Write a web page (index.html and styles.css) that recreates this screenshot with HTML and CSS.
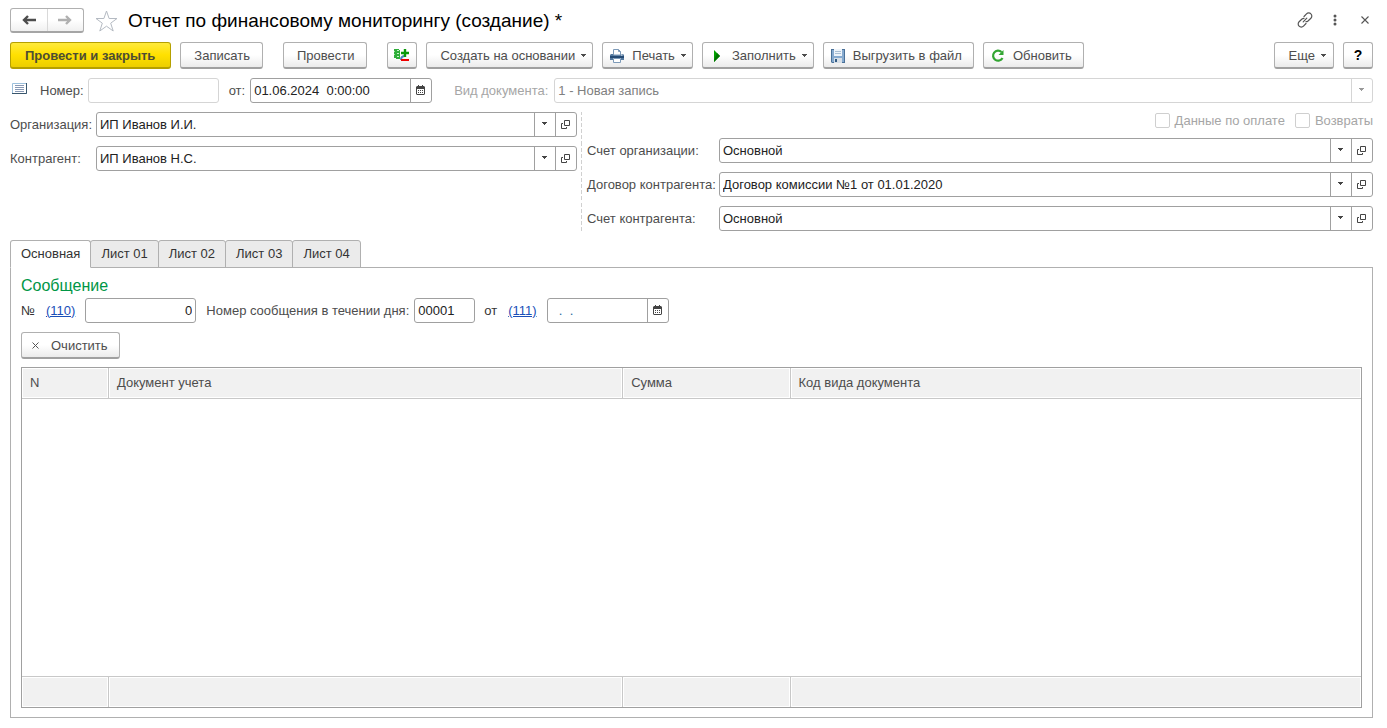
FILE: index.html
```html
<!DOCTYPE html>
<html lang="ru">
<head>
<meta charset="utf-8">
<title>Отчет по финансовому мониторингу (создание) *</title>
<link rel="stylesheet" href="styles.css">
</head>
<body>
<svg class="defs" aria-hidden="true">
  <symbol id="caret" viewBox="0 0 6 4" preserveAspectRatio="xMinYMin"><path d="M0 0h5v1H4v1H3v1H2V2H1V1H0z" fill="currentColor"/></symbol>
  <symbol id="open" viewBox="0 0 10 9" fill="none" stroke="currentColor"><path d="M3.500.5h5v5h-5zM2 3.500H.5v5h5V7"/></symbol>
  <symbol id="calendar" viewBox="0 0 10 11"><path d="M1 1h1V0h1v1h3V0h1v1h1l1 1v7l-1 1H1L0 9V2zM1 4v5h7V4z" fill="currentColor" fill-rule="evenodd"/><path d="M2 5h1v1H2zM4 5h1v1H4zM6 5h1v1H6zM2 7h1v1H2zM4 7h1v1H4zM6 7h1v1H6z" fill="currentColor"/></symbol>
</svg>

<header class="titlebar">
  <div class="nav">
    <button type="button" class="nav-btn" aria-label="Назад"><svg width="14" height="12" viewBox="0 0 14 12"><path d="M6 2 2 6l4 4M2 6h12" fill="none" stroke="#4d4d4d" stroke-width="2.400"/></svg></button>
    <button type="button" class="nav-btn" aria-label="Вперед"><svg width="14" height="12" viewBox="0 0 14 12"><path d="m8 2 4 4-4 4M12 6H0" fill="none" stroke="#b0b0b0" stroke-width="2.400"/></svg></button>
  </div>
  <button type="button" class="plain star" aria-label="В избранное"><svg width="23" height="22" viewBox="0 0 23 22"><path d="m11.500 1 2.600 7.500H22l-6.300 4.700L18.200 21l-6.700-4.800L4.800 21l2.500-7.800L1 8.500h7.900z" fill="#fff" stroke="#b4bac2"/></svg></button>
  <h1 class="title">Отчет по финансовому мониторингу (создание) *</h1>
  <div class="window-tools">
    <button type="button" class="plain" aria-label="Получить ссылку"><svg width="16" height="16" viewBox="0 0 16 16" fill="none" stroke="#555" stroke-width="1.200" stroke-linecap="round"><path d="m7 4.500 2.500-2.600a3 3 0 0 1 4.400 0 3 3 0 0 1 0 4.300L11 9a3 3 0 0 1-2 .7M9 11.500l-2.500 2.600a3 3 0 0 1-4.400 0 3 3 0 0 1 0-4.300L5 7a3 3 0 0 1 2-.7M6.200 9.800l3.600-3.600"/></svg></button>
    <button type="button" class="plain" aria-label="Меню"><svg width="4" height="12" viewBox="0 0 4 12" fill="#555"><circle cx="2" cy="2" r="1.500"/><circle cx="2" cy="6" r="1.500"/><circle cx="2" cy="10" r="1.500"/></svg></button>
    <button type="button" class="plain" aria-label="Закрыть"><svg width="8" height="8" viewBox="0 0 8 8"><path d="m.5.5 7 7m0-7-7 7" stroke="#555" stroke-width="1.100"/></svg></button>
  </div>
</header>

<div class="toolbar">
  <button type="button" class="btn primary">Провести и закрыть</button>
  <button type="button" class="btn">Записать</button>
  <button type="button" class="btn apart">Провести</button>
  <button type="button" class="btn icon-only apart" aria-label="Движения документа"><svg width="18" height="16" viewBox="0 0 18 16"><path d="M1 2h5v1h1v9H3v-1H1z" fill="#2fae3a"/><path d="M4 3.500h2M4 6.500h2M4 9.500h2" stroke="#c9f2cb"/><path d="M1 4.500h1M1 7.500h1" stroke="#9be0a0"/><path d="M8 13c0-3 1-4 4-4" fill="none" stroke="#4a86c0" stroke-width="2"/><path d="M12 2v8M8 6h8" stroke="#0b9a0b" stroke-width="2.400"/><path d="M8 13h8" stroke="#f00000" stroke-width="2"/></svg></button>
  <button type="button" class="btn menu">Создать на основании<svg class="caret"><use href="#caret"/></svg></button>
  <button type="button" class="btn menu tool"><svg class="tool-icon" width="14" height="14" viewBox="0 0 14 14"><path d="M1 5h12l1 1v5h-3V9H3v2H0V6z" fill="#54799f"/><path d="M0 7h14v2H0z" fill="#254b75"/><path d="M3.500 6V.5h5l2 2V6zM3.500 9.500h7v4h-7z" fill="#fff" stroke="#7d9ab8"/><path d="M8.500.5v2h2" fill="none" stroke="#7d9ab8"/><path d="M11 6h1.500" stroke="#fff"/></svg><span class="tool-label">Печать</span><svg class="caret"><use href="#caret"/></svg></button>
  <button type="button" class="btn menu tool"><svg class="tool-icon" width="14" height="14" viewBox="0 0 14 14"><path d="m4 1 6 6-6 6z" fill="#00a000"/><path d="m7 4 3 3-6 6v-2z" fill="#007400"/></svg><span class="tool-label">Заполнить</span><svg class="caret"><use href="#caret"/></svg></button>
  <button type="button" class="btn tool"><svg class="tool-icon" width="14" height="14" viewBox="0 0 14 14"><path d="M0 0h14v14H1l-1-1z" fill="#4a7199"/><path d="M1 1h12v12H1z" fill="#87abd0"/><path d="M3 0h8v7H3z" fill="#eef4fa"/><path d="M4 2.500h6M4 4.500h6" stroke="#a9bfd4"/><path d="M3 9h8v5H3z" fill="#d7dfe7"/><path d="M4 10h2v3H4z" fill="#315a84"/></svg><span class="tool-label">Выгрузить в файл</span></button>
  <button type="button" class="btn tool"><svg class="tool-icon" width="14" height="14" viewBox="0 0 14 14"><path d="M10.500 3A5 5 0 1 0 11.500 9" fill="none" stroke="#32a532" stroke-width="2.200"/><path d="M12.500 1v5h-5z" fill="#32a532"/></svg><span class="tool-label">Обновить</span></button>
  <span class="spacer"></span>
  <button type="button" class="btn menu more">Еще<svg class="caret"><use href="#caret"/></svg></button>
  <button type="button" class="btn icon-only help">?</button>
</div>

<div class="doc-row">
  <svg class="doc-icon" width="15" height="11" viewBox="0 0 15 11"><path d="M.5.5h14v10H.5z" fill="#fff" stroke="#9dc0dc"/><path d="M14.500 0v10.500H0" fill="none" stroke="#39566d"/><path d="M3 2.500h9M3 4.500h9M3 6.500h9M3 8.500h9" stroke="#8899b5"/></svg>
  <label class="label" for="number">Номер:</label>
  <input class="box number disabled" id="number" disabled>
  <label class="label date-label" for="date">от:</label>
  <div class="box field date">
    <input id="date" value="01.06.2024  0:00:00">
    <button type="button" aria-label="Календарь"><svg width="10" height="11"><use href="#calendar"/></svg></button>
  </div>
  <label class="label kind-label muted" for="kind">Вид документа:</label>
  <div class="box field grow disabled">
    <div class="pick"><select id="kind" disabled><option>1 - Новая запись</option></select><span class="arrow"><svg class="caret"><use href="#caret"/></svg></span></div>
  </div>
</div>

<div class="columns">
  <div class="form left">
    <label class="label" for="org">Организация:</label>
    <div class="box field">
      <div class="pick"><select id="org"><option>ИП Иванов И.И.</option></select><span class="arrow"><svg class="caret"><use href="#caret"/></svg></span></div>
      <button type="button" aria-label="Открыть"><svg width="10" height="9"><use href="#open"/></svg></button>
    </div>
    <label class="label" for="partner">Контрагент:</label>
    <div class="box field">
      <div class="pick"><select id="partner"><option>ИП Иванов Н.С.</option></select><span class="arrow"><svg class="caret"><use href="#caret"/></svg></span></div>
      <button type="button" aria-label="Открыть"><svg width="10" height="9"><use href="#open"/></svg></button>
    </div>
  </div>
  <div class="right-column">
    <div class="checks">
      <label class="check"><input type="checkbox" disabled>Данные по оплате</label>
      <label class="check"><input type="checkbox" disabled>Возвраты</label>
    </div>
    <div class="form right">
      <label class="label" for="org-account">Счет организации:</label>
      <div class="box field">
        <div class="pick"><select id="org-account"><option>Основной</option></select><span class="arrow"><svg class="caret"><use href="#caret"/></svg></span></div>
        <button type="button" aria-label="Открыть"><svg width="10" height="9"><use href="#open"/></svg></button>
      </div>
      <label class="label" for="contract">Договор контрагента:</label>
      <div class="box field">
        <div class="pick"><select id="contract"><option>Договор комиссии №1 от 01.01.2020</option></select><span class="arrow"><svg class="caret"><use href="#caret"/></svg></span></div>
        <button type="button" aria-label="Открыть"><svg width="10" height="9"><use href="#open"/></svg></button>
      </div>
      <label class="label" for="partner-account">Счет контрагента:</label>
      <div class="box field">
        <div class="pick"><select id="partner-account"><option>Основной</option></select><span class="arrow"><svg class="caret"><use href="#caret"/></svg></span></div>
        <button type="button" aria-label="Открыть"><svg width="10" height="9"><use href="#open"/></svg></button>
      </div>
    </div>
  </div>
</div>

<div class="tabs" role="tablist">
  <button type="button" class="tab active" role="tab" aria-selected="true">Основная</button>
  <button type="button" class="tab" role="tab" aria-selected="false">Лист 01</button>
  <button type="button" class="tab" role="tab" aria-selected="false">Лист 02</button>
  <button type="button" class="tab" role="tab" aria-selected="false">Лист 03</button>
  <button type="button" class="tab" role="tab" aria-selected="false">Лист 04</button>
</div>

<main class="panel" role="tabpanel">
  <h2 class="section">Сообщение</h2>
  <div class="message-row">
    <label class="dark" for="message-number">№</label>
    <a class="link" href="#message-number">(110)</a>
    <input class="box message-number" id="message-number" value="0">
    <label class="label day-label" for="day-number">Номер сообщения в течении дня:</label>
    <input class="box day-number" id="day-number" value="00001">
    <label class="dark from-label" for="message-date">от</label>
    <a class="link" href="#message-date">(111)</a>
    <div class="box field message-date">
      <input id="message-date" value="  .  .">
      <button type="button" aria-label="Календарь"><svg width="10" height="11"><use href="#calendar"/></svg></button>
    </div>
  </div>
  <button type="button" class="btn clear"><svg width="7" height="7" viewBox="0 0 7 7"><path d="m.5.5 6 6m0-6-6 6" stroke="#555"/></svg>Очистить</button>
  <div class="table-wrap">
    <table class="table">
      <colgroup><col class="col-n"><col class="col-doc"><col class="col-sum"><col></colgroup>
      <thead><tr><th>N</th><th>Документ учета</th><th>Сумма</th><th>Код вида документа</th></tr></thead>
      <tbody><tr><td colspan="4"></td></tr></tbody>
      <tfoot><tr><td></td><td></td><td></td><td></td></tr></tfoot>
    </table>
  </div>
</main>
</body>
</html>
```
FILE: styles.css
```css
* { box-sizing: border-box; }

body {
  display: flex;
  flex-direction: column;
  min-height: 100vh;
  margin: 0;
  padding: 8px 14px 10px 10px;
  background: #fff;
  color: #4d4d4d;
  font: 13px/16px "Liberation Sans", Arial, sans-serif;
}

button, input, select { margin: 0; font: inherit; color: inherit; }
.defs { position: absolute; width: 0; height: 0; }
.caret { flex: none; width: 6px; height: 4px; }

/* Title bar */
.titlebar { display: flex; align-items: center; height: 25px; margin-bottom: 9px; }
.nav {
  display: flex;
  width: 74px;
  height: 25px;
  border: 1px solid #b0b0b0;
  border-bottom: 2px solid #a5a5a5;
  border-radius: 3px;
  background: linear-gradient(#fff 50%, #f0f0f0);
}
.nav-btn {
  display: flex;
  flex: 1;
  align-items: center;
  justify-content: center;
  padding: 0;
  border: 0;
  background: none;
}
.nav-btn + .nav-btn { border-left: 1px solid #d9d9d9; }
.plain { display: flex; align-items: center; justify-content: center; padding: 0; border: 0; background: none; }
.star { margin: 0 10px 0 11px; }
.title { flex: 1; margin: 0; color: #000; font-size: 19px; font-weight: 400; line-height: 24px; }
.window-tools { display: flex; height: 23px; align-self: flex-start; margin-right: -7px; }
.window-tools .plain { width: 30px; }

/* Command bar */
.toolbar { display: flex; gap: 9px; margin-bottom: 9px; }
.btn {
  display: flex;
  align-items: center;
  height: 27px;
  padding: 1px 12px 0 13px;
  border: 1px solid #b0b0b0;
  border-bottom: 2px solid #a0a0a0;
  border-radius: 3px;
  background: linear-gradient(#fff 50%, #ebebeb);
  white-space: nowrap;
}
.primary {
  padding-right: 15px;
  padding-left: 14px;
  border-color: #b5a000;
  background: linear-gradient(#ffea3c, #ffe000 50%, #ecce00);
  color: #4d4d33;
  font-weight: 700;
}
.apart { margin-left: 11px; }
.icon-only { justify-content: center; width: 30px; padding: 0; }
.menu { padding-right: 5px; gap: 6px; }
.more { padding-right: 6px; padding-left: 14px; }
.tool { padding-left: 7px; gap: 0; }
.tool-icon { flex: none; }
.tool-label { padding: 0 6px 0 8px; }
.tool:not(.menu) { padding-right: 5px; }
.help { color: #000; font-weight: 700; font-size: 14px; }
.spacer { flex: 1; }

/* Fields */
.label { white-space: nowrap; }
.muted { color: #a6a6a6; }
.dark { color: #333; }
.box {
  height: 25px;
  border: 1px solid #a0a0a0;
  border-radius: 3px;
  background: #fff;
  color: #222;
}
input.box { padding: 0 3px; }
.box.disabled { border-color: #d5d5d5; color: #808080; }
.field { display: flex; min-width: 0; }
.field input, .pick select {
  flex: 1;
  width: 100%;
  min-width: 0;
  height: 23px;
  padding: 0 3px;
  border: 0;
  border-radius: 3px;
  background: none;
  opacity: 1;
  white-space: pre;
}
.pick select { appearance: none; padding-right: 24px; }
.pick { position: relative; flex: 1; min-width: 0; }
.arrow {
  position: absolute;
  top: 0;
  right: 0;
  bottom: 0;
  display: flex;
  align-items: center;
  justify-content: center;
  width: 21px;
  border-left: 1px solid #a0a0a0;
  color: #444;
  pointer-events: none;
}
.disabled .arrow { border-color: #d5d5d5; color: #999; }
.arrow .caret { height: 5px; }
.field button {
  display: flex;
  align-items: center;
  justify-content: center;
  width: 21px;
  padding: 0;
  border: 0;
  border-left: 1px solid #a0a0a0;
  background: none;
  color: #444;
}

.doc-row { display: flex; align-items: center; margin-bottom: 9px; }
.doc-icon { margin: 0 13px 4px 2px; }
.number { width: 131px; margin-left: 4px; }
.date-label { margin: 0 5px 0 10px; }
.date { width: 182px; }
.kind-label { margin: 0 6px 0 22px; }
.grow { flex: 1; }

.columns {
  display: grid;
  grid-template-columns: minmax(0, 567fr) minmax(0, 792fr);
  gap: 4px;
  margin-bottom: 9px;
}
.form { display: grid; align-items: center; align-content: start; row-gap: 9px; }
.left { grid-template-columns: 86px minmax(0, 1fr); }
.right { grid-template-columns: 132px minmax(0, 1fr); }
.right-column {
  padding-left: 5px;
  border-left: 1px solid;
  border-image: repeating-linear-gradient(#d0d0d0 0 4px, transparent 4px 6px) 1;
}
.checks { display: flex; justify-content: flex-end; gap: 10px; height: 26px; }
.check { display: flex; gap: 5px; height: 17px; align-items: center; color: #a6a6a6; }
.check input {
  appearance: none;
  width: 15px;
  height: 15px;
  border: 1px solid #cfcfcf;
  border-radius: 2px;
  background: #fff;
}

/* Tabs */
.tabs { display: flex; }
.tab {
  height: 28px;
  margin-right: -1px;
  padding: 0 10px;
  border: 1px solid #b0b0b0;
  border-radius: 3px 3px 0 0;
  background: #ebebeb;
  color: #333;
}
.tab.active { z-index: 1; border-bottom-color: #fff; background: #fff; }
.panel {
  display: flex;
  flex: 1;
  flex-direction: column;
  align-items: flex-start;
  margin-top: -1px;
  padding: 8px 10px 9px;
  border: 1px solid #b0b0b0;
}
.section { margin: 0 0 2px; color: #009646; font-size: 16px; font-weight: 400; line-height: 20px; }
.message-row { display: flex; align-items: center; margin-bottom: 9px; }
.link { margin: 0 10px 0 11px; color: #1a4fb8; }
.message-number { width: 111px; text-align: right; }
.day-label { margin: 0 5px 0 10px; }
.day-number { width: 61px; }
.from-label { margin-left: 9px; }
.message-date { width: 122px; color: #2a6a9c; }
.message-date input { padding-left: 4px; }
.clear { gap: 12px; padding-right: 11px; padding-left: 10px; margin-bottom: 8px; }

/* Table */
.table-wrap { display: flex; flex: 1; align-self: stretch; border: 1px solid #a0a0a0; }
.table { width: 100%; border-collapse: separate; border-spacing: 0; table-layout: fixed; }
.col-n { width: 87px; }
.col-doc { width: 38.4%; }
.col-sum { width: 12.5%; }
.table th, .table tfoot td {
  height: 31px;
  padding: 0 8px;
  border-right: 1px solid #c8c8c8;
  background: #f1f1f1;
  box-shadow: inset 0 0 0 1px #fff;
  font-weight: 400;
  text-align: left;
}
.table th { border-bottom: 1px solid #c8c8c8; }
.table tfoot td { border-top: 1px solid #c8c8c8; }
.table th:last-child, .table tfoot td:last-child { border-right: 0; }
.table tbody td { padding: 0; }
```
